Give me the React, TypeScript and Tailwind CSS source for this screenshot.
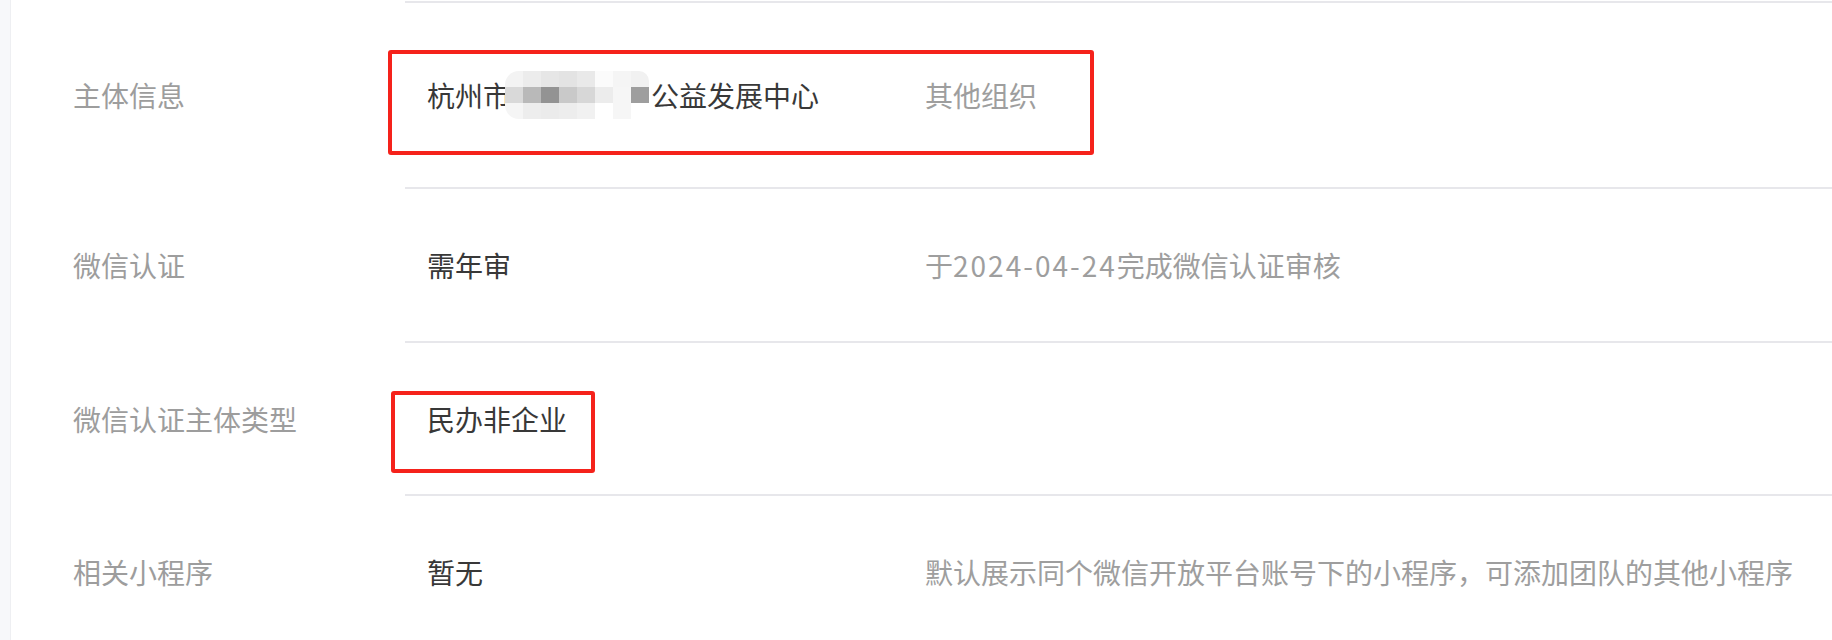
const mosaic = [
  ['bg-[#f3f3f3]', 'bg-[#ececec]', 'bg-[#e6e6e6]', 'bg-[#e3e3e3]', 'bg-[#e9e9e9]', 'bg-[#fbfbfb]', 'bg-[#f5f5f5]', 'bg-[#f1f1f1]'],
  ['bg-[#d9d9d9]', 'bg-[#b9b9b9]', 'bg-[#939393]', 'bg-[#c9c9c9]', 'bg-[#d7d7d7]', 'bg-[#ececec]', 'bg-[#f6f6f6]', 'bg-[#9e9e9e]'],
  ['bg-[#f5f5f5]', 'bg-[#ededed]', 'bg-[#ebebeb]', 'bg-[#ededed]', 'bg-[#f1f1f1]', 'bg-white', 'bg-[#f6f6f6]', 'bg-white'],
];

const Mosaic = () => (
  <span className="inline-flex flex-col w-[144px] h-[48px] -ml-[6px] mr-[2px] rounded-l-[14px] rounded-r-[10px] overflow-hidden">
    {mosaic.map((row, i) => (
      <span key={i} className="flex flex-1">
        {row.map((c, j) => <span key={j} className={`flex-1 ${c}`} />)}
      </span>
    ))}
  </span>
);

interface RowProps {
  label: string;
  value: React.ReactNode;
  desc?: React.ReactNode;
  height: string;
}

const Row = ({ label, value, desc, height }: RowProps) => (
  <div className={`flex ${height}`}>
    <div className="w-[394px] shrink-0 flex items-center pl-[62px] pt-[2px] text-[#9d9d9d]">{label}</div>
    <div className="flex-1 flex items-center border-t-2 border-[#e7e7eb] pl-[22px]">
      <div className="w-[498px] shrink-0 flex items-center text-[#383838]">{value}</div>
      {desc && <div className="text-[#9e9e9e]">{desc}</div>}
    </div>
  </div>
);

export default function App() {
  return (
    <div className="relative flex h-[640px] w-full overflow-hidden bg-white text-[28px] leading-none"
      style={{ fontFamily: '"Noto Sans CJK SC", "Noto Sans", sans-serif' }}>
      <div className="w-[11px] shrink-0 bg-[#f7f8fa] border-r border-[#eeeff2]" />
      <div className="flex-1 pt-[1px]">
        <Row height="h-[186px]" label="主体信息"
          value={<span className="inline-flex items-center">杭州市<Mosaic />公益发展中心</span>}
          desc="其他组织" />
        <Row height="h-[154px]" label="微信认证" value="需年审"
          desc={<>于<span className="tracking-[2px]">2024-04-24</span>完成微信认证审核</>} />
        <Row height="h-[153px]" label="微信认证主体类型" value="民办非企业" />
        <Row height="h-[153px]" label="相关小程序" value="暂无" desc="默认展示同个微信开放平台账号下的小程序，可添加团队的其他小程序" />
      </div>

      {/* red annotation boxes */}
      <div className="absolute left-[388px] top-[50px] w-[706px] h-[105px] border-4 border-[#f5221b] rounded-[3px]" />
      <div className="absolute left-[391px] top-[391px] w-[204px] h-[82px] border-4 border-[#f5221b] rounded-[3px]" />
    </div>
  );
}
